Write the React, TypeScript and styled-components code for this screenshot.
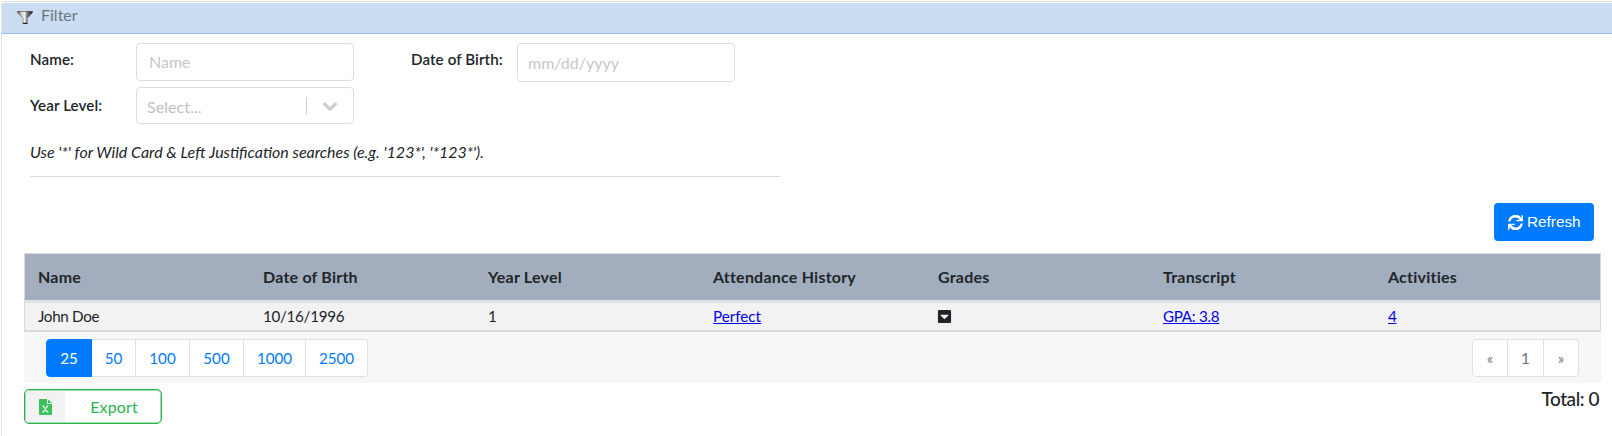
import React from "react";
import styled, { createGlobalStyle } from "styled-components";
import { FaCaretSquareDown } from "react-icons/fa";

const GlobalStyle = createGlobalStyle`
  *, *::before, *::after { box-sizing: border-box; }
  body {
    margin: 0;
    background: #fff;
    color: #212529;
    font-family: Lato, "Liberation Sans", sans-serif;
    font-size: 16px;
    line-height: 24px;
    overflow: hidden;
  }
`;

const Panel = styled.section`
  margin: 1px 0 0 1px;
  height: 435px;
  border: 1px solid #dfdfdf;
  border-right: 0;
  border-bottom: 0;
  border-top-left-radius: 4px;
  padding-top: 1px;
`;

const PanelHeader = styled.header`
  display: flex;
  height: 31px;
  padding-left: 15px;
  background: #cbddf3;
  border-bottom: 1px solid #99bbe8;
  border-top-left-radius: 3px;
  color: #6c757d;
  line-height: 24px;

  svg { margin: 7px 8px 0 0; }
`;

const PanelBody = styled.div`
  padding: 9px 11px 0 22px;
`;

const FilterForm = styled.form`
  display: grid;
  grid-template-columns: 106px 218px 57px 106px 218px;
  grid-template-rows: 44px 37px;
  align-items: start;
  padding-left: 6px;
`;

const FieldLabel = styled.label<{ $col: number; $top?: number }>`
  grid-column: ${(p) => p.$col};
  padding-top: ${(p) => p.$top ?? 4}px;
  font-size: 15.2px;
  font-weight: 600;
  letter-spacing: 0.08px;
  white-space: nowrap;
`;

const TextInput = styled.input<{ $height: number; $inset: number; $lift?: number }>`
  width: 218px;
  height: ${(p) => p.$height}px;
  padding: 0 ${(p) => p.$inset}px ${(p) => p.$lift ?? 0}px;
  border: 1px solid #dcdddd;
  border-radius: 4px;
  outline: none;
  font: 16px Lato, sans-serif;

  &::placeholder { color: #c7c8c8; opacity: 1; }
`;

const SelectBox = styled.div`
  display: flex;
  align-items: center;
  width: 218px;
  height: 37px;
  padding: 2px 13px 0 10px;
  border: 1px solid #dcdddd;
  border-radius: 4px;
  color: #bfbfbf;

  span { flex: 1; letter-spacing: 0.08px; }
  svg { margin-top: -1px; }
`;

const SelectDivider = styled.i`
  width: 1px;
  height: 18px;
  margin: -1px 13px 0 0;
  background: #ccc;
`;

const Hint = styled.p`
  width: 750px;
  height: 53px;
  margin: 0 0 0 6px;
  padding-top: 16px;
  border-bottom: 1px solid #dcdcdc;
  font-size: 15.96px;
  font-style: italic;
`;

const Toolbar = styled.div`
  display: flex;
  justify-content: flex-end;
  padding: 26px 7px 12px 0;
`;

const RefreshButton = styled.button`
  display: flex;
  align-items: center;
  gap: 4px;
  width: 100px;
  height: 38px;
  padding: 0 0 1px 14px;
  border: 0;
  border-radius: 4px;
  background: #007bff;
  color: #fff;
  font: 15.3px "Liberation Sans", sans-serif;

  svg { margin-top: 2px; }
`;

const Table = styled.table`
  width: 1577px;
  border: 1px solid #d9dbdd;
  border-bottom: 2px solid #d8d8d8;
  border-collapse: separate;
  border-spacing: 0;
  table-layout: fixed;
`;

const HeadCell = styled.th`
  height: 49px;
  padding: 0 13px 1px;
  background: #a2aebe;
  border-bottom: 3px solid #dee2e6;
  font-size: 16px;
  font-weight: 700;
  letter-spacing: 0.22px;
  text-align: left;
`;

const Cell = styled.td`
  height: 27px;
  padding: 0 13px 1px;
  background: #f2f2f2;
  font-size: 15.2px;
  letter-spacing: -0.3px;
  line-height: 24px;

  a { color: #00e; text-decoration: underline; }
  svg { display: block; margin-left: -1px; }
`;

const WordLink = styled.a`
  letter-spacing: 0;
`;

const TableFooter = styled.div`
  display: flex;
  justify-content: space-between;
  width: 1577px;
  height: 51px;
  padding: 7px 22px 0;
  background: #f7f7f7;
  border-radius: 0 0 4px 4px;
`;

const PageList = styled.div`
  display: flex;
  height: 38px;
`;

const PageItem = styled.button<{ $width: number; $active?: boolean; $muted?: boolean }>`
  width: ${(p) => p.$width}px;
  height: 38px;
  padding: 0 0 1px;
  border: 1px solid ${(p) => (p.$active ? "#007bff" : "#dee2e6")};
  background: ${(p) => (p.$active ? "#007bff" : "#fff")};
  color: ${(p) => (p.$active ? "#fff" : p.$muted ? "#6c757d" : "#007bff")};
  font: 15.2px/24px Lato, sans-serif;

  & + & { border-left: 0; }
  &:first-child { border-radius: 4px 0 0 4px; }
  &:last-child { border-radius: 0 4px 4px 0; }
`;

const BottomBar = styled.div`
  display: flex;
  justify-content: space-between;
  padding: 6px 2px 0 0;
`;

const ExportButton = styled.button`
  display: flex;
  width: 138px;
  height: 35px;
  padding: 0;
  overflow: hidden;
  border: 1px solid #28b34b;
  border-radius: 5px;
  background: #fff;
  box-shadow: inset 0 0 0 1px #a5dcb3;
  color: #28b34b;
  font: 16px/33px Lato, sans-serif;
`;

const ExportIcon = styled.span`
  display: flex;
  align-items: center;
  justify-content: center;
  width: 39px;
  height: 31px;
  margin: 1px 0 0 1px;
  background: #f2f2f2;
`;

const ExportText = styled.span`
  flex: 1;
  padding-left: 2px;
  letter-spacing: 0.15px;
  text-align: center;
`;

const Total = styled.div`
  margin-top: -2px;
  font-size: 19px;
  font-weight: 500;
  letter-spacing: -0.45px;
`;

const FunnelIcon = () => (
  <svg width="16" height="15" viewBox="0 0 16 15">
    <defs>
      <linearGradient id="metal" x1="0" x2="1">
        <stop offset="0" stopColor="#555" />
        <stop offset="0.3" stopColor="#d5d5d5" />
        <stop offset="0.48" stopColor="#f2f2f2" />
        <stop offset="0.65" stopColor="#777" />
        <stop offset="1" stopColor="#222" />
      </linearGradient>
    </defs>
    <path d="M.2 1h15.4v1.8L10.6 8.3V14H5.6V8.3L.2 2.8z" fill="url(#metal)" />
    <path d="M.5 1.5h15" stroke="#555" strokeOpacity=".65" />
    <path d="M1 2.8l5 5.4V14" fill="none" stroke="#555" strokeOpacity=".5" />
    <path d="M6 13.4h4.4" stroke="#222" strokeWidth="1.2" />
  </svg>
);

const ChevronIcon = () => (
  <svg width="20" height="20" viewBox="0 0 20 20" fill="#ccc" stroke="#ccc" strokeWidth=".8">
    <path d="M4.516 7.548c0.436-0.446 1.043-0.481 1.576 0l3.908 3.747 3.908-3.747c0.533-0.481 1.141-0.446 1.574 0 0.436 0.445 0.408 1.197 0 1.615-0.406 0.418-4.695 4.502-4.695 4.502-0.217 0.223-0.502 0.335-0.787 0.335s-0.57-0.112-0.789-0.335c0 0-4.287-4.084-4.695-4.502s-0.436-1.17 0-1.615z" transform="translate(-1.5 -1.5) scale(1.15)" />
  </svg>
);

const SyncIcon = () => (
  <svg width="15" height="15" viewBox="0 0 512 512" fill="currentColor">
    <path d="M500 8h-27c-7 0-12 6-12 12l-3 81A247 247 0 0 0 10 206c-2 8 4 14 12 14h49c6 0 10-4 12-9a178 178 0 0 1 320-43l-105-5c-7 0-13 5-13 12v28c0 7 5 12 12 12h203c7 0 12-5 12-12V20c0-7-5-12-12-12zM12 504h27c7 0 12-6 12-12l3-81a247 247 0 0 0 448-105c2-8-4-14-12-14h-49c-6 0-10 4-12 9a178 178 0 0 1-320 43l105 5c7 0 13-5 13-12v-28c0-7-5-12-12-12H12c-7 0-12 5-12 12v183c0 7 5 12 12 12z" />
  </svg>
);

const SpreadsheetIcon = () => (
  <svg width="13" height="16" viewBox="0 0 13 16">
    <path d="M1 0h7v5h5v10a1 1 0 0 1-1 1H1a1 1 0 0 1-1-1V1a1 1 0 0 1 1-1z" fill="#3cc15d" />
    <path d="M9 .2L12.8 4H9z" fill="#3cc15d" />
    <path d="M4.3 7.2l4.2 5.6M8.5 7.2l-4.2 5.6M3.4 7h2M7.4 7h2M3.4 13h2M7.4 13h2" fill="none" stroke="#eefaf1" strokeWidth="1.2" />
  </svg>
);

const columns = ["Name", "Date of Birth", "Year Level", "Attendance History", "Grades", "Transcript", "Activities"];

const pageSizes = [
  { label: "25", width: 46 },
  { label: "50", width: 44 },
  { label: "100", width: 54 },
  { label: "500", width: 54 },
  { label: "1000", width: 62 },
  { label: "2500", width: 62 },
];

export default function App() {
  return (
    <>
      <GlobalStyle />
      <Panel>
        <PanelHeader>
          <FunnelIcon />
          Filter
        </PanelHeader>
        <PanelBody>
          <FilterForm>
            <FieldLabel $col={1}>Name:</FieldLabel>
            <TextInput $height={38} $inset={12} $lift={2} placeholder="Name" />
            <FieldLabel $col={4}>Date of Birth:</FieldLabel>
            <TextInput $height={39} $inset={10} placeholder="mm/dd/yyyy" />
            <FieldLabel $col={1} $top={6}>Year Level:</FieldLabel>
            <SelectBox>
              <span>Select...</span>
              <SelectDivider />
              <ChevronIcon />
            </SelectBox>
          </FilterForm>
          <Hint>Use '*' for Wild Card &amp; Left Justification searches (e.g. '123*', '*123*').</Hint>
          <Toolbar>
            <RefreshButton>
              <SyncIcon />
              Refresh
            </RefreshButton>
          </Toolbar>
          <Table>
            <thead>
              <tr>
                {columns.map((name) => (
                  <HeadCell key={name}>{name}</HeadCell>
                ))}
              </tr>
            </thead>
            <tbody>
              <tr>
                <Cell>John Doe</Cell>
                <Cell>10/16/1996</Cell>
                <Cell>1</Cell>
                <Cell><WordLink href="#">Perfect</WordLink></Cell>
                <Cell><FaCaretSquareDown size={15} /></Cell>
                <Cell><a href="#">GPA: 3.8</a></Cell>
                <Cell><a href="#">4</a></Cell>
              </tr>
            </tbody>
          </Table>
          <TableFooter>
            <PageList>
              {pageSizes.map((size, i) => (
                <PageItem key={size.label} $width={size.width} $active={i === 0}>{size.label}</PageItem>
              ))}
            </PageList>
            <PageList>
              <PageItem $width={36} $muted>«</PageItem>
              <PageItem $width={36} $muted>1</PageItem>
              <PageItem $width={35} $muted>»</PageItem>
            </PageList>
          </TableFooter>
          <BottomBar>
            <ExportButton>
              <ExportIcon><SpreadsheetIcon /></ExportIcon>
              <ExportText>Export</ExportText>
            </ExportButton>
            <Total>Total: 0</Total>
          </BottomBar>
        </PanelBody>
      </Panel>
    </>
  );
}
